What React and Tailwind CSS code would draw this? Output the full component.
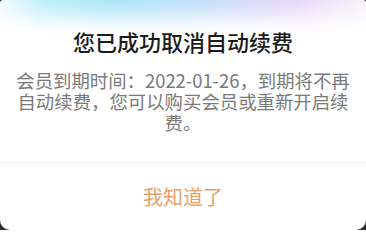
export default function App() {
  return (
    <div className="w-[366px] h-[230px] bg-[#2e2e2e] overflow-hidden">
      <div
        className="h-full flex flex-col rounded-t-[3px] rounded-b-[10px] bg-white bg-[linear-gradient(to_bottom,rgba(255,255,255,0)_0px,rgba(255,255,255,0.35)_12px,rgba(255,255,255,0.8)_24px,#ffffff_34px),linear-gradient(90deg,#f4fcfd_0%,#bdeef8_12%,#a9e5f5_30%,#bde0f8_50%,#d2d9f8_66%,#e9d8f8_82%,#f8f2fc_100%)]"
        style={{ fontFamily: '"Noto Sans CJK SC", "Noto Sans", sans-serif' }}
      >
        <h1 className="pt-[26px] text-center text-[22px] leading-[30px] font-medium text-[#1c1c1c]">
          您已成功取消自动续费
        </h1>
        <p className="mt-[14px] px-[16px] text-center text-[18.4px] leading-[21px] text-[#7a7a7a]">
          会员到期时间：2022-01-26，到期将不再自动续费，您可以购买会员或重新开启续费。
        </p>
        <div className="mt-auto border-t border-[#f0f0f0] h-[68px] flex items-center justify-center">
          <button className="text-[20px] leading-[28px] text-[#e9a066]">我知道了</button>
        </div>
      </div>
    </div>
  )
}
